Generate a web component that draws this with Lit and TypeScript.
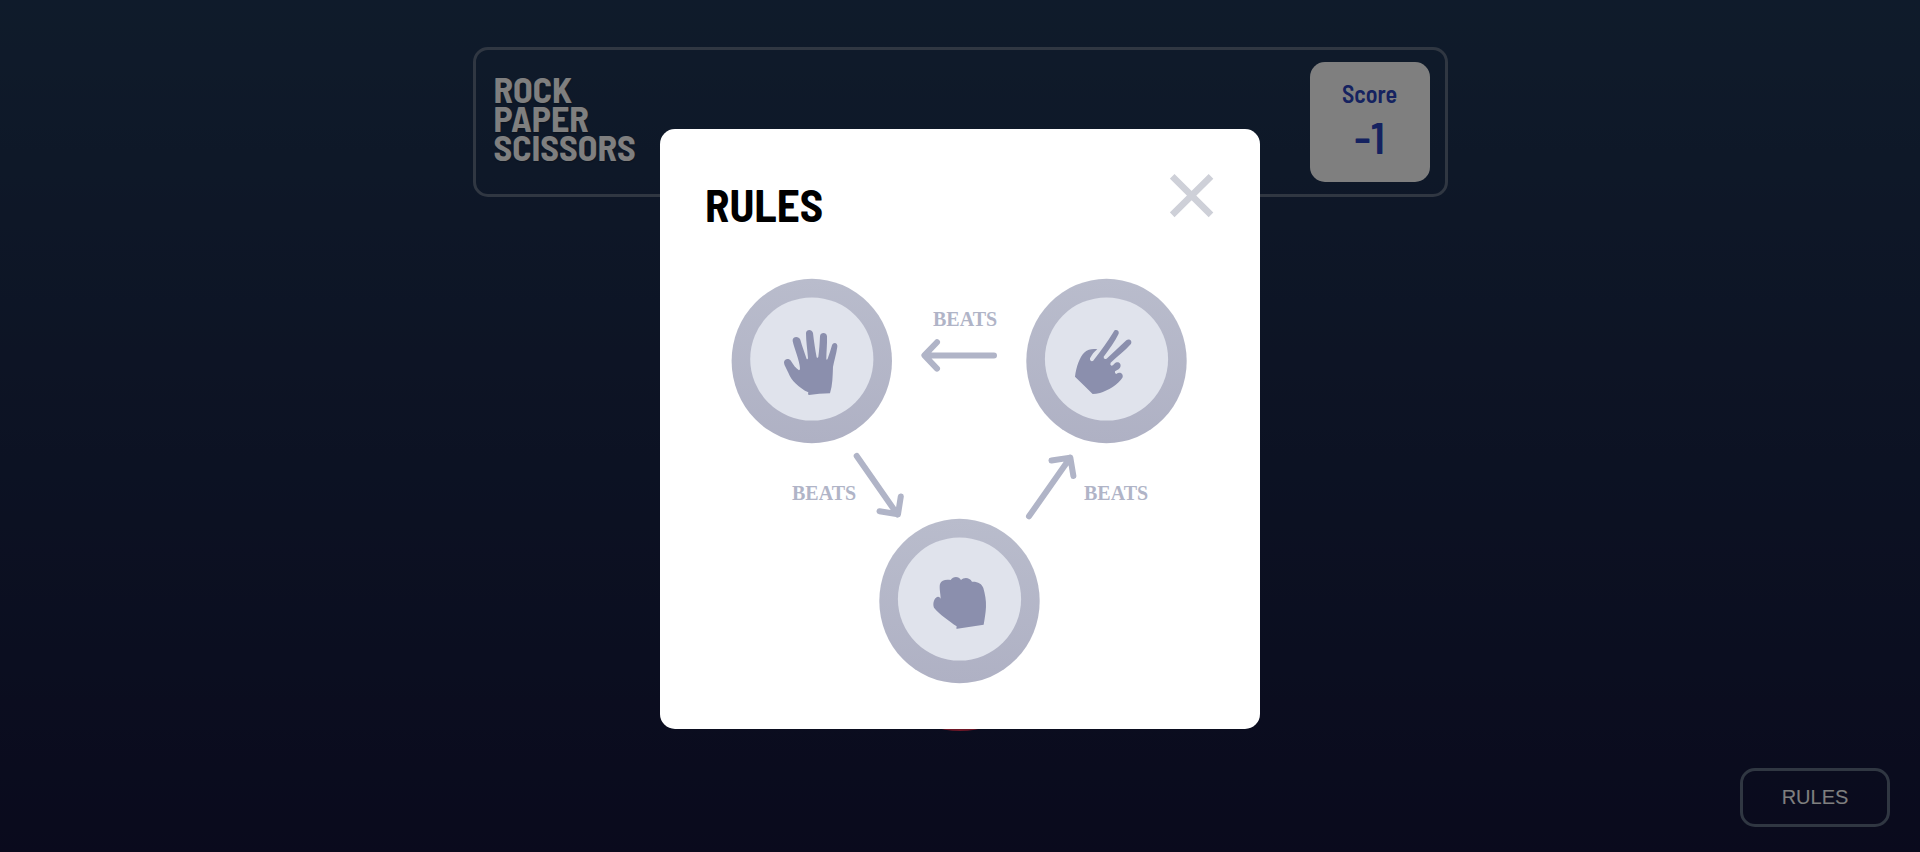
import { LitElement, html, svg, css } from "lit";
import { customElement, property, state } from "lit/decorators.js";

const HANDS = {
  paper: "M264 403 L265 397 C238 384 213 361 205 338 C199 324 193 317 192 308 C192 296 207 293 213 303 C220 315 228 325 237 331 Q240 331 240 325 C238 299 224 270 218 243 C216 229 236 226 241 239 C247 260 254 279 260 297 Q263 300 264 294 C262 270 258 243 258 219 C259 207 276 207 279 219 C282 245 286 270 290 292 Q293 296 295 290 C298 270 299 250 300 229 C301 216 320 216 321 229 C322 253 319 275 319 297 Q320 302 323 296 C328 283 332 270 336 256 C340 244 354 248 352 260 C349 282 342 303 339 321 C338 348 338 375 330 400 Q297 401 267 405 Z",
  scissors: "M195 350 C199 322 208 292 224 277 C234 268 247 266 262 268 C252 276 246 284 240 295 Q239 303 246 304 Q250 304 253 298 C273 272 293 244 311 215 C316 206 329 211 326 221 C315 244 298 267 281 290 Q280 298 288 297 Q291 296 293 293 L349 241 C358 234 369 243 362 253 C345 272 322 290 302 308 Q299 314 304 317 Q309 317 313 311 C324 300 337 311 330 323 C325 330 318 331 315 334 Q313 341 319 342 C329 334 341 341 338 352 C327 373 292 393 270 399 Q258 402 248 402 Q221 375 195 350 Z",
  rock: "M289 386 L290 379 C268 363 240 345 222 323 C217 310 223 295 231 291 Q238 288 242 296 C242 281 237 264 240 252 C244 240 257 238 272 240 C279 228 297 228 303 240 C311 231 329 231 336 245 C353 244 366 251 370 264 C375 281 379 301 378 321 C377 340 374 357 371 374 Q331 380 292 386 Z",
};

@customElement("rules-diagram")
class RulesDiagram extends LitElement {
  static styles = css`
    :host { display: block; }
    svg { display: block; width: 100%; height: auto; overflow: visible; }
    .disc { fill: #e0e3ec; }
    .hand { fill: #8b8fad; }
    .arrows { fill: none; stroke: #b0b4c7; stroke-width: 6; stroke-linecap: round; stroke-linejoin: round; }
    .beats { font: 700 20px "Liberation Serif", "Times New Roman", serif; fill: #b0b4c7; }
  `;

  private token(cx: number, cy: number, hand: string, x: number, y: number) {
    return svg`
      <ellipse cx=${cx} cy=${cy + 2} rx="80.2" ry="82.2" fill="url(#ring)"></ellipse>
      <circle class="disc" cx=${cx} cy=${cy} r="61.6"></circle>
      <path class="hand" transform="translate(${x} ${y}) scale(0.3333)" d=${hand}></path>`;
  }

  render() {
    return html`
      <svg viewBox="0 0 456 405" role="img" aria-label="Paper beats rock, rock beats scissors, scissors beats paper">
        <defs>
          <linearGradient id="ring" x1="0" y1="0" x2="0" y2="1">
            <stop offset="0" stop-color="#b9bccc"></stop>
            <stop offset="1" stop-color="#afb1c4"></stop>
          </linearGradient>
        </defs>
        ${this.token(79.8, 80, HANDS.paper, -12, -19)}
        ${this.token(374.5, 80, HANDS.scissors, 278, -19)}
        ${this.token(227.5, 320, HANDS.rock, 128, 221)}
        <g class="arrows">
          <path d="M262 76.4 H193 M205 63.2 L192.4 76.4 L205 89.6"></path>
          <path d="M124.7 177 L165.5 235.5 M147.5 232.3 L166 235.2 L168.8 217.5"></path>
          <path d="M297 237.3 L338 179 M319.5 181.5 L338.3 178.6 L341.4 197"></path>
        </g>
        <text class="beats" x="201" y="47">BEATS</text>
        <text class="beats" x="60" y="221">BEATS</text>
        <text class="beats" x="352" y="221">BEATS</text>
      </svg>`;
  }
}

@customElement("rules-dialog")
class RulesDialog extends LitElement {
  static styles = css`
    :host {
      position: fixed;
      inset: 0;
      display: flex;
      justify-content: center;
      align-items: center;
      background: rgba(0, 0, 0, 0.5);
      font-family: "Barlow Semi Condensed", "Roboto Condensed", sans-serif;
    }
    .panel {
      box-sizing: border-box;
      width: 600px;
      max-width: 100%;
      min-height: 600px;
      margin-top: 6px;
      padding: 45px;
      border-radius: 15px;
      background: #fff;
    }
    .head {
      display: flex;
      justify-content: space-between;
      align-items: flex-start;
      margin-bottom: 45px;
    }
    .title { margin: 0; font-size: 45px; line-height: 60px; font-weight: 700; color: #000; }
    .close { padding: 0; border: 0; background: none; cursor: pointer; }
    .close svg { display: block; width: 45px; height: 45px; }
    .diagram { width: 456px; max-width: 100%; margin: 0 auto; }
  `;

  private close() {
    this.dispatchEvent(new CustomEvent("close"));
  }

  render() {
    return html`
      <section class="panel" role="dialog" aria-modal="true" aria-labelledby="title">
        <div class="head">
          <h2 class="title" id="title">RULES</h2>
          <button class="close" aria-label="Close" @click=${this.close}>
            <svg viewBox="0 0 45 45" fill="none" stroke="#ced0d8" stroke-width="6.6">
              <path d="M2.2 2.4 L41 40.8 M41 2.4 L2.2 40.8"></path>
            </svg>
          </button>
        </div>
        <rules-diagram class="diagram"></rules-diagram>
      </section>`;
  }
}

@customElement("score-header")
class ScoreHeader extends LitElement {
  @property({ type: Number }) score = 0;

  static styles = css`
    :host {
      box-sizing: border-box;
      display: flex;
      justify-content: space-between;
      align-items: center;
      padding: 12px 15px 12px 18px;
      border: 3px solid #606e85;
      border-radius: 15px;
    }
    .logo {
      margin: 0;
      padding-bottom: 10px;
      font-size: 36px;
      line-height: 29px;
      font-weight: 700;
      color: #fff;
      text-shadow: 0 1px 2px rgba(0, 0, 0, 0.3);
    }
    .card {
      box-sizing: border-box;
      display: flex;
      flex-direction: column;
      justify-content: center;
      align-items: center;
      width: 120px;
      height: 120px;
      padding-bottom: 2px;
      border-radius: 15px;
      background: #fff;
      color: #2a45c0;
    }
    .label { font-size: 24px; line-height: 30px; font-weight: 600; }
    .value { font-size: 45px; line-height: 54px; font-weight: 600; }
  `;

  render() {
    return html`
      <h1 class="logo">ROCK<br />PAPER<br />SCISSORS</h1>
      <div class="card">
        <span class="label">Score</span>
        <span class="value">${this.score}</span>
      </div>`;
  }
}

@customElement("app-root")
class AppRoot extends LitElement {
  @state() private rulesOpen = true;

  static styles = css`
    :host {
      box-sizing: border-box;
      display: flex;
      flex-direction: column;
      align-items: center;
      min-height: 100vh;
      padding: 47px 30px 25px;
      background: linear-gradient(#1f3756, #14153a);
      font-family: "Barlow Semi Condensed", "Roboto Condensed", sans-serif;
    }
    .header { width: 100%; max-width: 975px; }
    .board {
      display: grid;
      grid-template-columns: 160px 160px;
      justify-content: space-between;
      row-gap: 140px;
      width: 456px;
      max-width: 100%;
      margin: 74px 0 30px;
    }
    .choice {
      box-sizing: border-box;
      width: 160px;
      height: 160px;
      padding: 30px;
      border: 18px solid;
      border-radius: 50%;
      background: #e0e3ec;
      cursor: pointer;
    }
    .choice svg { display: block; width: 100%; }
    .paper { border-color: #4865f4; }
    .scissors { border-color: #ec9e0e; }
    .rock { grid-column: 1 / -1; justify-self: center; border-color: #dc2e4e; }
    .open-rules {
      align-self: flex-end;
      width: 150px;
      margin-top: auto;
      padding: 15px 0;
      border: 3px solid #606e85;
      border-radius: 15px;
      background: transparent;
      color: #fff;
      font: 400 20px/23px "Liberation Sans", Arial, sans-serif;
      cursor: pointer;
    }
  `;

  private choice(kind: "paper" | "scissors" | "rock") {
    return html`
      <button class="choice ${kind}" aria-label=${kind}>
        <svg viewBox="180 200 200 210"><path fill="#3b4262" d=${HANDS[kind]}></path></svg>
      </button>`;
  }

  render() {
    return html`
      <score-header class="header" .score=${-1}></score-header>
      <main class="board">
        ${this.choice("paper")} ${this.choice("scissors")} ${this.choice("rock")}
      </main>
      <button class="open-rules" @click=${() => (this.rulesOpen = true)}>RULES</button>
      ${this.rulesOpen
        ? html`<rules-dialog @close=${() => (this.rulesOpen = false)}></rules-dialog>`
        : null}`;
  }
}
